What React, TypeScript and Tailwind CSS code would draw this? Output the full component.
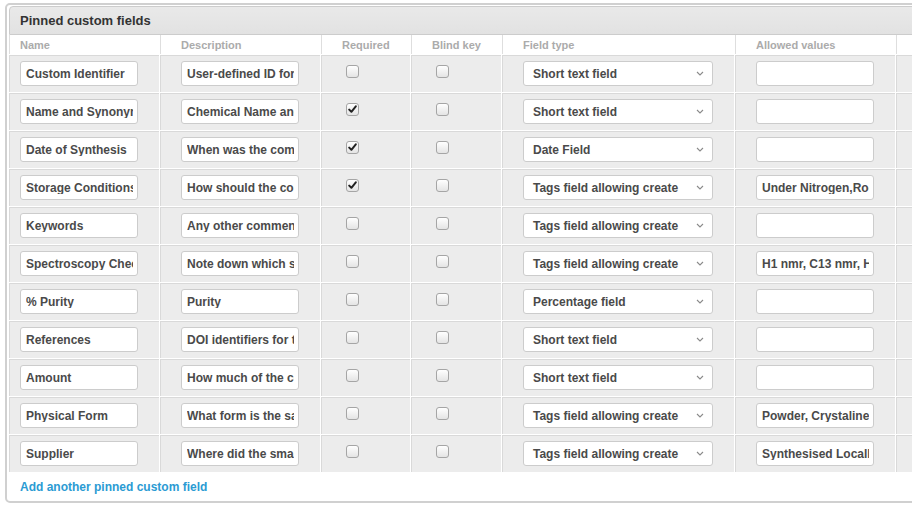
import React from "react";

type Row = {
  name: string;
  desc: string;
  req: boolean;
  blind: boolean;
  type: string;
  allowed: string;
};

const rows: Row[] = [
  { name: "Custom Identifier", desc: "User-defined ID for the compound", req: false, blind: false, type: "Short text field", allowed: "" },
  { name: "Name and Synonyms", desc: "Chemical Name and Synonyms", req: true, blind: false, type: "Short text field", allowed: "" },
  { name: "Date of Synthesis", desc: "When was the compound made", req: true, blind: false, type: "Date Field", allowed: "" },
  { name: "Storage Conditions", desc: "How should the compound be stored", req: true, blind: false, type: "Tags field allowing create", allowed: "Under Nitrogen,Room Temperature" },
  { name: "Keywords", desc: "Any other comments", req: false, blind: false, type: "Tags field allowing create", allowed: "" },
  { name: "Spectroscopy Checked", desc: "Note down which spectra", req: false, blind: false, type: "Tags field allowing create", allowed: "H1 nmr, C13 nmr, HPLC" },
  { name: "% Purity", desc: "Purity", req: false, blind: false, type: "Percentage field", allowed: "" },
  { name: "References", desc: "DOI identifiers for the references", req: false, blind: false, type: "Short text field", allowed: "" },
  { name: "Amount", desc: "How much of the compound", req: false, blind: false, type: "Short text field", allowed: "" },
  { name: "Physical Form", desc: "What form is the sample", req: false, blind: false, type: "Tags field allowing create", allowed: "Powder, Crystaline, Oil" },
  { name: "Supplier", desc: "Where did the small molecule come from", req: false, blind: false, type: "Tags field allowing create", allowed: "Synthesised Locally" },
];

function TextBox({ value }: { value: string }) {
  return (
    <div className="w-[118px] h-[25px] bg-white border border-[#cccccc] rounded-[3px] pl-[5px] pr-[4px] flex items-center">
      <div className="overflow-hidden whitespace-nowrap text-[12px] font-bold text-[#4a4a4a] leading-none w-full">
        {value}
      </div>
    </div>
  );
}

function Check({ checked }: { checked: boolean }) {
  return (
    <div className="w-[13px] h-[13px] rounded-[3px] border border-[#a5a5a5] bg-linear-to-b from-white to-[#e4e4e4] flex items-center justify-center">
      {checked && (
        <svg width="9" height="9" viewBox="0 0 9 9">
          <path d="M1.2 4.6 L3.4 6.8 L7.8 1.4" stroke="#222" strokeWidth="2" fill="none" strokeLinecap="round" strokeLinejoin="round" />
        </svg>
      )}
    </div>
  );
}

function Select({ value }: { value: string }) {
  return (
    <div className="w-[190px] h-[25px] bg-white border border-[#cccccc] rounded-[3px] pl-[9px] pr-[8px] flex items-center justify-between">
      <span className="text-[12px] font-bold text-[#4a4a4a] leading-none whitespace-nowrap">{value}</span>
      <svg width="8" height="5" viewBox="0 0 8 5">
        <path d="M1 1 L4 4 L7 1" stroke="#8a8a8a" strokeWidth="1.1" fill="none" />
      </svg>
    </div>
  );
}

const cell = "h-[37px] shrink-0 bg-[#ececec] border-t border-l border-[#d9d9d9]";
const head = "h-[19px] shrink-0 bg-white border-l border-[#dedede] flex items-center pt-[2px] text-[11px] font-bold text-[#ababab] leading-none";

export default function App() {
  return (
    <div className="w-[912px] h-[513px] overflow-hidden bg-white font-['Liberation_Sans',Arial,sans-serif]">
      <div className="ml-[5px] mt-[3px] w-[1000px] h-[500px] border-2 border-[#d0d0d0] rounded-[5px] pt-px pl-[2px] flex flex-col">
        <div className="h-[29px] border border-[#cccccc] rounded-t-[4px] bg-linear-to-b from-[#e9e9e9] to-[#e2e2e2] flex items-center pl-[10px]">
          <span className="text-[13px] font-bold text-[#333333]">Pinned custom fields</span>
        </div>
        <div className="flex flex-col gap-px bg-white">
          <div className="flex gap-px">
            <div className={`${head} w-[150px] pl-[10px]`}>Name</div>
            <div className={`${head} w-[160px] pl-[20px]`}>Description</div>
            <div className={`${head} w-[89px] pl-[20px]`}>Required</div>
            <div className={`${head} w-[90px] pl-[20px]`}>Blind key</div>
            <div className={`${head} w-[232px] pl-[20px]`}>Field type</div>
            <div className={`${head} w-[160px] pl-[20px]`}>Allowed values</div>
            <div className={`${head} w-[100px]`}></div>
          </div>
          {rows.map((r, i) => (
            <div key={i} className="flex gap-px">
              <div className={`${cell} w-[150px] pl-[10px] pt-[5px]`}>
                <TextBox value={r.name} />
              </div>
              <div className={`${cell} w-[160px] pl-[20px] pt-[5px]`}>
                <TextBox value={r.desc} />
              </div>
              <div className={`${cell} w-[89px] pl-[24px] pt-[9px]`}>
                <Check checked={r.req} />
              </div>
              <div className={`${cell} w-[90px] pl-[24px] pt-[9px]`}>
                <Check checked={r.blind} />
              </div>
              <div className={`${cell} w-[232px] pl-[20px] pt-[5px]`}>
                <Select value={r.type} />
              </div>
              <div className={`${cell} w-[160px] pl-[20px] pt-[5px]`}>
                <TextBox value={r.allowed} />
              </div>
              <div className={`${cell} w-[100px]`}></div>
            </div>
          ))}
        </div>
        <div className="flex-1 flex items-center pl-[11px]">
          <span className="text-[12px] font-bold text-[#2b9bd3]">Add another pinned custom field</span>
        </div>
      </div>
    </div>
  );
}
